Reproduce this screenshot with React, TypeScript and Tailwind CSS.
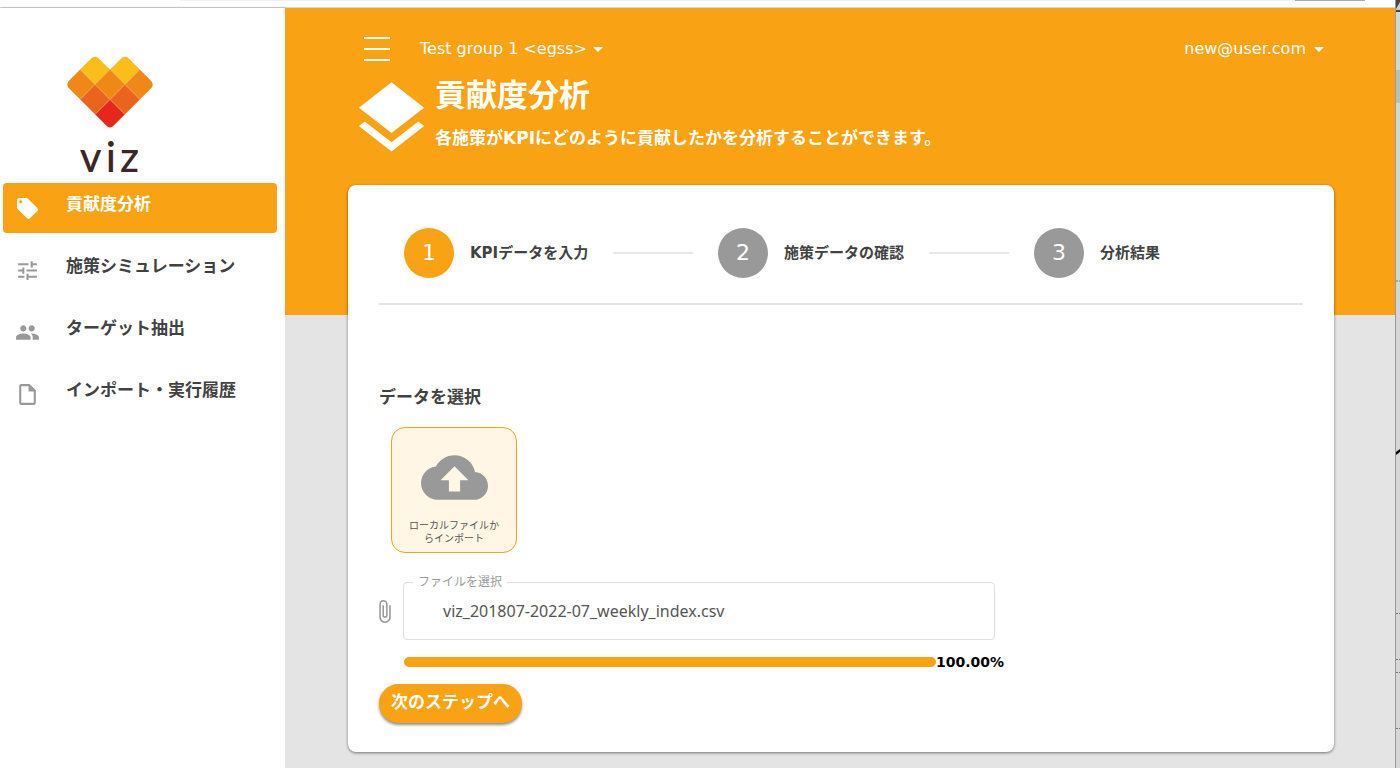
import React from "react";
import {
  MdAttachFile,
  MdCloudUpload,
  MdLayers,
  MdLocalOffer,
  MdOutlineInsertDriveFile,
  MdPeople,
  MdTune,
} from "react-icons/md";

const navItems = [
  { label: "貢献度分析", Icon: MdLocalOffer, active: true },
  { label: "施策シミュレーション", Icon: MdTune, active: false },
  { label: "ターゲット抽出", Icon: MdPeople, active: false },
  { label: "インポート・実行履歴", Icon: MdOutlineInsertDriveFile, active: false },
];

const steps = [
  { label: "KPIデータを入力", active: true },
  { label: "施策データの確認", active: false },
  { label: "分析結果", active: false },
];

function Logo() {
  return (
    <div className="flex flex-col items-center pr-[66px]">
      <svg viewBox="65 54 90 76" className="h-[76px] w-[90px]" aria-hidden="true">
        <defs>
          <clipPath id="heart">
            <path d="M69.5 80L90.5 59Q95 54.5 99.5 59L110 69.5L120.5 59Q125 54.5 129.5 59L150.5 80Q155 84.5 150.5 89L114 125.5Q110 129.5 106 125.5L69.5 89Q65 84.5 69.5 80Z" />
          </clipPath>
        </defs>
        <g clipPath="url(#heart)" stroke="#f6b070" strokeWidth="0.4">
          <path fill="#fbbe18" d="M95 54.5l15 15-15 15-15-15zM125 54.5l15 15-15 15-15-15z" />
          <path
            fill="#f08817"
            d="M80 69.5l15 15-15 15-15-15zM110 69.5l15 15-15 15-15-15zM140 69.5l15 15-15 15-15-15z"
          />
          <path fill="#ea641f" d="M95 84.5l15 15-15 15-15-15zM125 84.5l15 15-15 15-15-15z" />
          <path fill="#e6271e" d="M110 99.5l15 15-15 15-15-15z" />
        </g>
      </svg>
      <span className="pl-1 font-['Lato',sans-serif] text-[42px] leading-[52px] font-medium tracking-widest text-[#3d2628]">
        viz
      </span>
    </div>
  );
}

function Sidebar() {
  return (
    <aside className="w-[285px] shrink-0 bg-white pt-[46px] shadow-[1px_0_2px_rgba(0,0,0,0.3)]">
      <Logo />
      <nav className="mt-px flex flex-col gap-3 pr-2 pl-[3px]">
        {navItems.map(({ label, Icon, active }) => (
          <a
            key={label}
            href="#"
            className={
              active
                ? "flex h-[50px] items-center gap-[26px] rounded bg-[#f9a213] px-3 text-white"
                : "flex h-[50px] items-center gap-[26px] rounded px-3 text-[#999]"
            }
          >
            <Icon size={25} className="shrink-0" />
            <span
              className={
                active
                  ? "pb-2 text-[17px] leading-6 font-bold text-white"
                  : "pb-2 text-[17px] leading-6 font-bold text-[#424242]"
              }
            >
              {label}
            </span>
          </a>
        ))}
      </nav>
    </aside>
  );
}

function Caret() {
  return (
    <svg viewBox="0 0 10 5" className="h-[5px] w-[10px]" fill="currentColor" aria-hidden="true">
      <path d="M0 0h10L5 5z" />
    </svg>
  );
}

function Header() {
  return (
    <header>
      <div className="flex h-8 items-center pr-[10px] pl-4">
        <button type="button" aria-label="メニュー" className="flex flex-col gap-[9px]">
          <span className="h-[2px] w-[26px] bg-white" />
          <span className="h-[2px] w-[26px] bg-white" />
          <span className="h-[2px] w-[26px] bg-white" />
        </button>
        <button type="button" className="ml-[30px] flex items-center gap-[6px] text-base leading-6">
          Test group 1 &lt;egss&gt;
          <Caret />
        </button>
        <button type="button" className="ml-auto flex items-center gap-2 text-base leading-6">
          new@user.com
          <Caret />
        </button>
      </div>
      <div className="mt-[10px] flex">
        <MdLayers size={87} className="shrink-0" />
        <div>
          <h1 className="text-[31px] leading-10 font-bold">貢献度分析</h1>
          <p className="mt-[11px] text-[17px] leading-6 font-bold">
            各施策がKPIにどのように貢献したかを分析することができます。
          </p>
        </div>
      </div>
    </header>
  );
}

function Stepper() {
  return (
    <ol className="flex max-w-[806px] items-center px-[25px]">
      {steps.map(({ label, active }, i) => (
        <React.Fragment key={label}>
          {i > 0 && <li aria-hidden="true" className="mx-[25px] h-[2px] flex-1 bg-[#e8e8e8]" />}
          <li className="flex items-center gap-4">
            <span
              className={
                active
                  ? "flex size-[50px] items-center justify-center rounded-full bg-[#f9a213] pb-[2px] text-[22px] text-white"
                  : "flex size-[50px] items-center justify-center rounded-full bg-[#999] pb-[2px] text-[22px] text-white"
              }
            >
              {i + 1}
            </span>
            <span className="text-[15px] leading-6 font-bold whitespace-nowrap text-[#424242]">{label}</span>
          </li>
        </React.Fragment>
      ))}
    </ol>
  );
}

function ImportForm() {
  return (
    <form className="flex flex-col items-start">
      <h2 className="text-[17px] leading-7 font-bold text-[#424242]">データを選択</h2>
      <button
        type="button"
        className="mt-4 ml-3 flex size-[126px] flex-col items-center rounded-[14px] border border-[#f9a213] bg-[#fff6e6] px-[14px] pt-4 text-[#999]"
      >
        <MdCloudUpload size={67} className="shrink-0" />
        <span className="mt-2 text-[10px] leading-[13px] text-[#555]">
          ローカルファイルか
          <br />
          らインポート
        </span>
      </button>
      <div className="mt-[21px] -ml-[7px] flex w-[623px] max-w-full items-center gap-[6px]">
        <MdAttachFile size={25} className="mt-2 shrink-0 text-[#999]" />
        <fieldset className="h-[66px] min-w-0 flex-1 rounded border border-[#dedede] pl-[9px]">
          <legend className="px-[5px] text-xs leading-4 text-[#999]">
            <label htmlFor="file-name">ファイルを選択</label>
          </legend>
          <input
            id="file-name"
            type="text"
            readOnly
            defaultValue="viz_201807-2022-07_weekly_index.csv"
            className="h-[42px] w-full bg-transparent px-[30px] font-['Noto_Sans',sans-serif] text-base text-[#555] outline-none"
          />
        </fieldset>
      </div>
      <div className="mt-3 flex h-5 w-[625px] max-w-full items-center pl-[25px]">
        <div
          role="progressbar"
          aria-label="アップロード"
          aria-valuenow={100}
          className="h-[10px] flex-1 rounded-[5px] bg-[#f9a213]"
        />
        <span className="text-sm leading-5 font-bold text-black">100.00%</span>
      </div>
      <button
        type="button"
        className="mt-3 h-[39px] rounded-full bg-[#f9a213] px-3 pb-1 text-[17px] leading-6 font-bold text-white shadow-[0_2px_3px_rgba(0,0,0,0.45)]"
      >
        次のステップへ
      </button>
    </form>
  );
}

// Sliver of the neighbouring window visible past the right edge.
function WindowEdge() {
  return (
    <div className="w-[5px] shrink-0 overflow-hidden border-l border-[#999] bg-[#d6d6d6]">
      <svg viewBox="0 0 4 768" className="h-[768px] w-1" aria-hidden="true">
        <path d="M0 0h4v12H0z" fill="#444" />
        <path d="M0 9L4 2v8H0z" fill="#ccc" />
        <path d="M0 70h4v33H0z" fill="#bdbdbd" />
        <path d="M0 452L4 449v3L0 455z" fill="#000" />
        <path d="M0 281h4M0 613.5h4M0 659.5h4M0 672.5h4M0 728.5h4" stroke="#777" strokeDasharray="2 1" />
      </svg>
    </div>
  );
}

export default function App() {
  return (
    <div className="flex min-h-screen bg-[#e4e4e4] font-['DejaVu_Sans','Noto_Sans_CJK_JP',sans-serif]">
      <div className="flex min-w-0 flex-1 flex-col">
        <div className="flex h-2 shrink-0 items-start border-b border-[#d9d9d9] bg-white pr-[30px] pl-[180px]">
          <span className="h-px flex-1 bg-[#f1f1f1]" />
          <span className="h-px w-[70px] bg-[#aaa]" />
        </div>
        <div className="flex flex-1">
          <Sidebar />
          <main className="min-w-0 flex-1 bg-[linear-gradient(#f9a213_307px,#e4e4e4_307px)] pt-[25px] pr-[61px] pb-4 pl-[63px]">
            <div className="text-white">
              <Header />
            </div>
            <section className="mt-[23px] rounded-lg bg-white px-[31px] pt-[43px] pb-[29px] shadow-[0_1px_3px_rgba(0,0,0,0.5)]">
              <Stepper />
              <hr className="mt-[25px] mb-[78px] border-t-2 border-[#e4e4e4]" />
              <ImportForm />
            </section>
          </main>
        </div>
      </div>
      <WindowEdge />
    </div>
  );
}
